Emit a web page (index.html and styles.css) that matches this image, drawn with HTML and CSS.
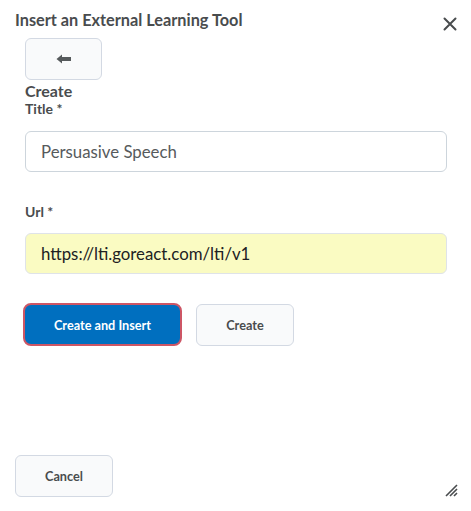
FILE: index.html
```html
<!DOCTYPE html>
<html>
<head>
<meta charset="utf-8">
<link rel="stylesheet" href="styles.css">
</head>
<body>
<div class="dialog">
  <div class="header">
    <h1 class="title">Insert an External Learning Tool</h1>
    <button class="close" aria-label="Close">
      <svg width="14" height="14" viewBox="0 0 14 14"><path d="M1.5 1.5 L12.5 12.5 M12.5 1.5 L1.5 12.5" stroke="#494c4e" stroke-width="2" stroke-linecap="round"/></svg>
    </button>
  </div>
  <div class="content">
    <button class="back" aria-label="Back">
      <svg width="16" height="10" viewBox="0 0 16 10"><path d="M0.5 5 L6 0.5 L6 3 L15 3 L15 7 L6 7 L6 9.5 Z" fill="#565a5c"/></svg>
    </button>
    <h2 class="subtitle">Create</h2>
    <label class="label">Title *</label>
    <div class="input">Persuasive Speech</div>
    <label class="label url-label">Url *</label>
    <div class="input filled">https://lti.goreact.com/lti/v1</div>
    <div class="actions">
      <button class="btn primary">Create and Insert</button>
      <button class="btn secondary">Create</button>
    </div>
  </div>
  <div class="footer">
    <button class="btn secondary cancel">Cancel</button>
    <svg class="grip" width="13" height="13" viewBox="0 0 13 13"><path d="M1 12 L12 1 M5 12 L12 5 M9 12 L12 9" stroke="#494c4e" stroke-width="1.6"/></svg>
  </div>
</div>
</body>
</html>
```
FILE: styles.css
```css
* { box-sizing: border-box; }
html, body { margin: 0; padding: 0; background: #fff; }
body {
  font-family: Lato, "Open Sans", sans-serif;
  color: #494c4e;
  width: 471px;
  height: 511px;
  overflow: hidden;
}
.dialog {
  display: flex;
  flex-direction: column;
  height: 511px;
}
.header {
  display: flex;
  justify-content: space-between;
  align-items: flex-start;
  padding: 9px 14px 0 15px;
}
.title {
  margin: 0;
  font-size: 16.3px;
  font-weight: 700;
  line-height: 22px;
}
.close {
  border: 0;
  background: none;
  padding: 0;
  margin-top: 8px;
  width: 14px;
  height: 14px;
  display: flex;
}
.content {
  display: flex;
  flex-direction: column;
  align-items: flex-start;
  padding: 7px 24px 0 25px;
}
.back {
  width: 77px;
  height: 42px;
  border: 1px solid #d3d9e3;
  border-radius: 6px;
  background: #f9fafb;
  display: flex;
  align-items: center;
  justify-content: center;
  padding: 0;
}
.subtitle {
  margin: 1px 0 0;
  font-size: 16px;
  font-weight: 700;
  line-height: 19px;
}
.label {
  font-size: 14px;
  font-weight: 700;
  line-height: 17px;
  margin-bottom: 14px;
}
.url-label { margin-top: 31px; margin-bottom: 13px; }
.input {
  width: 422px;
  height: 41px;
  border: 1px solid #cdd5dc;
  border-radius: 6px;
  background: #fff;
  padding: 0 15px;
  display: flex;
  align-items: center;
  font-size: 16.8px;
  color: #565a5c;
}
.filled {
  background: #fafbc2;
  color: #202122;
  border-color: #dfe3e8;
}
.actions {
  display: flex;
  gap: 14px;
  margin-top: 29px;
  margin-left: -2px;
}
.btn {
  font-family: Lato, "Open Sans", sans-serif;
  font-size: 12.7px;
  font-weight: 700;
  height: 42px;
  border-radius: 6px;
  padding: 0;
}
.primary {
  width: 159px;
  height: 43px;
  background: #006fbf;
  color: #fff;
  border: 2px solid #cd5665;
  border-radius: 8px;
}
.secondary {
  width: 98px;
  background: #f9fafb;
  color: #494c4e;
  border: 1px solid #d3d9e3;
  margin-top: 1px;
}
.footer {
  margin-top: auto;
  display: flex;
  justify-content: space-between;
  align-items: flex-end;
  padding: 0 13px 14px 15px;
}
.cancel { margin: 0; height: 42px; }
```
